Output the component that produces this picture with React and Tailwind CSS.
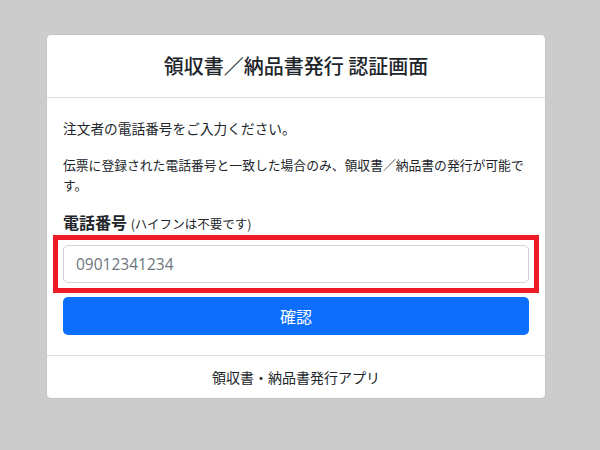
export default function App() {
  return (
    <div
      className="min-h-[450px] w-full bg-[#cccccc] pt-[34px] pl-[46px]"
      style={{ fontFamily: '"Noto Sans CJK JP", "Noto Sans", sans-serif' }}
    >
      <div className="w-[500px] rounded-[5px] border border-[#c4c4c4] bg-white text-[#212529]">
        {/* Header */}
        <div className="border-b border-[#dedede] py-4 text-center">
          <h5 className="text-[20px] font-medium leading-[30px]">領収書／納品書発行 認証画面</h5>
        </div>

        {/* Body */}
        <div className="px-4 pt-5 pb-5">
          <p className="mb-4 text-[13.7px] leading-[21px]">注文者の電話番号をご入力ください。</p>
          <p className="mb-[17px] text-[12.8px] leading-[19.5px]">
            伝票に登録された電話番号と一致した場合のみ、領収書／納品書の発行が可能です。
          </p>
          <label className="block text-[16px] font-bold leading-[22px]">
            電話番号 <span className="text-[12.5px] font-normal">(ハイフンは不要です)</span>
          </label>
          <div className="-mx-[10px] border-[5px] border-[#ed1c24] p-[5px]">
            <input
              type="tel"
              placeholder="09012341234"
              className="block h-[38px] w-full rounded-[5px] border border-[#ced4da] px-3 text-[15.5px] text-[#212529] placeholder:text-[#6c757d] outline-none"
              style={{ fontFamily: '"Open Sans", "Noto Sans", sans-serif' }}
            />
          </div>
          <button className="mt-1 block h-[38px] w-full rounded-[5px] bg-[#0d6efd] text-[16px] text-white">
            確認
          </button>
        </div>

        {/* Footer */}
        <div className="border-t border-[#dedede] pt-[9px] pb-[9px] text-center text-[14px] leading-6">
          領収書・納品書発行アプリ
        </div>
      </div>
    </div>
  );
}
